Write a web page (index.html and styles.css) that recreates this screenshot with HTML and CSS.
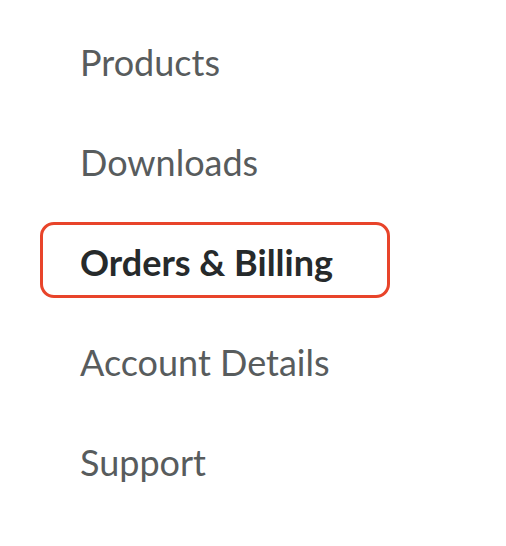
FILE: index.html
```html
<!DOCTYPE html>
<html>
<head>
<meta charset="utf-8">
<link rel="stylesheet" href="styles.css">
</head>
<body>
<nav class="menu">
  <a class="item">Products</a>
  <a class="item">Downloads</a>
  <a class="item active">Orders &amp; Billing</a>
  <a class="item">Account Details</a>
  <a class="item">Support</a>
</nav>
</body>
</html>
```
FILE: styles.css
```css
html, body {
  margin: 0;
  padding: 0;
  background: #ffffff;
}
.menu {
  display: flex;
  flex-direction: column;
  padding: 10px 0 0 40px;
  font-family: "Lato", sans-serif;
}
.item {
  box-sizing: border-box;
  width: 350px;
  height: 76px;
  margin: 12px 0;
  padding: 3px 0 0 37px;
  border: 3px solid transparent;
  border-radius: 14px;
  display: flex;
  align-items: center;
  font-size: 36px;
  color: #585c5d;
  text-decoration: none;
}
.item.active {
  border-color: #e8442a;
  color: #262a2b;
  font-weight: 700;
}
```
